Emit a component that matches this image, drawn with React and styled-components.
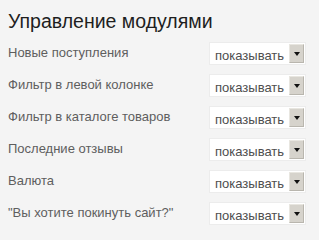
import React from "react";
import styled, { createGlobalStyle } from "styled-components";

const Global = createGlobalStyle`
  html, body {
    margin: 0;
    padding: 0;
    background: #f4f4f4;
  }
  body {
    font-family: "Liberation Sans", Arial, sans-serif;
  }
`;

const modules = [
  "Новые поступления",
  "Фильтр в левой колонке",
  "Фильтр в каталоге товаров",
  "Последние отзывы",
  "Валюта",
  "\"Вы хотите покинуть сайт?\"",
];

const Panel = styled.div`
  width: 319px;
  height: 240px;
  box-sizing: border-box;
  padding: 9px 0 0 8px;
  background: #f4f4f4;
`;

const Title = styled.h2`
  margin: 0 0 9px;
  font-size: 19.5px;
  font-weight: normal;
  line-height: 24px;
  color: #1e1e1e;
`;

const Row = styled.div`
  display: flex;
  align-items: flex-start;
  height: 32px;
`;

const Label = styled.span`
  width: 201px;
  font-size: 13px;
  line-height: 16px;
  padding-top: 3px;
  color: #5e5e5e;
`;

const Select = styled.div`
  display: flex;
  align-items: center;
  width: 97px;
  height: 23px;
  background: #fff;
  box-sizing: border-box;
  border: 1px solid #ececec;
`;

const Value = styled.span`
  flex: 1;
  padding: 3px 0 0 5px;
  font-size: 13px;
  color: #4e4e4e;
`;

const Arrow = styled.span`
  display: flex;
  align-items: center;
  justify-content: center;
  width: 15px;
  height: 19px;
  margin-right: 1px;
  background: #d6d3cc;
  border: 1px solid #b9b6ae;
  border-top-color: #e8e6e0;
  border-left-color: #e8e6e0;
  box-sizing: border-box;

  &::after {
    content: "";
    border-left: 3.5px solid transparent;
    border-right: 3.5px solid transparent;
    border-top: 4px solid #111;
  }
`;

const App = () => (
  <Panel>
    <Global />
    <Title>Управление модулями</Title>
    {modules.map((name) => (
      <Row key={name}>
        <Label>{name}</Label>
        <Select>
          <Value>показывать</Value>
          <Arrow />
        </Select>
      </Row>
    ))}
  </Panel>
);

export default App;
